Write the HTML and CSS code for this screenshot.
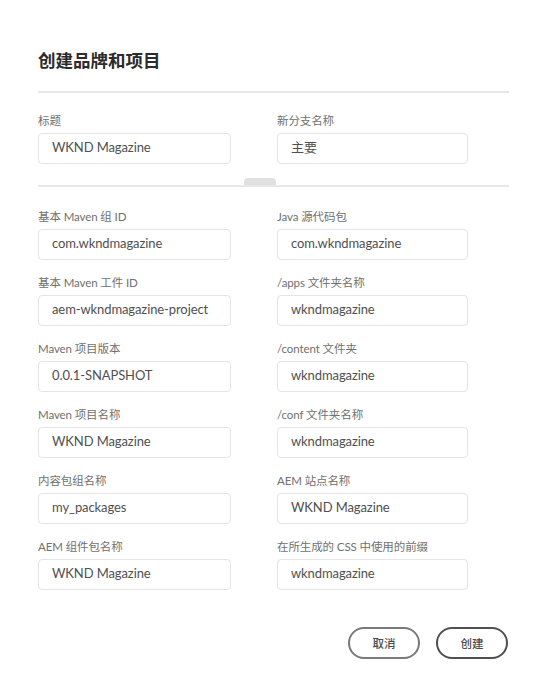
FILE: index.html
```html
<!DOCTYPE html>
<html lang="zh-CN">
<head>
<meta charset="utf-8">
<title>创建品牌和项目</title>
<link rel="stylesheet" href="styles.css">
</head>
<body>
<div class="dialog">
  <h1 class="title">创建品牌和项目</h1>
  <div class="divider"></div>
  <div class="grid top-grid">
    <div class="field">
      <div class="label">标题</div>
      <div class="input">WKND Magazine</div>
    </div>
    <div class="field">
      <div class="label">新分支名称</div>
      <div class="input">主要</div>
    </div>
  </div>
  <div class="divider divider-handle"><span class="handle"></span></div>
  <div class="grid main-grid">
    <div class="field">
      <div class="label">基本 Maven 组 ID</div>
      <div class="input">com.wkndmagazine</div>
    </div>
    <div class="field">
      <div class="label">Java 源代码包</div>
      <div class="input">com.wkndmagazine</div>
    </div>
    <div class="field">
      <div class="label">基本 Maven 工件 ID</div>
      <div class="input">aem-wkndmagazine-project</div>
    </div>
    <div class="field">
      <div class="label">/apps 文件夹名称</div>
      <div class="input">wkndmagazine</div>
    </div>
    <div class="field">
      <div class="label">Maven 项目版本</div>
      <div class="input">0.0.1-SNAPSHOT</div>
    </div>
    <div class="field">
      <div class="label">/content 文件夹</div>
      <div class="input">wkndmagazine</div>
    </div>
    <div class="field">
      <div class="label">Maven 项目名称</div>
      <div class="input">WKND Magazine</div>
    </div>
    <div class="field">
      <div class="label">/conf 文件夹名称</div>
      <div class="input">wkndmagazine</div>
    </div>
    <div class="field">
      <div class="label">内容包组名称</div>
      <div class="input">my_packages</div>
    </div>
    <div class="field">
      <div class="label">AEM 站点名称</div>
      <div class="input">WKND Magazine</div>
    </div>
    <div class="field">
      <div class="label">AEM 组件包名称</div>
      <div class="input">WKND Magazine</div>
    </div>
    <div class="field">
      <div class="label">在所生成的 CSS 中使用的前缀</div>
      <div class="input">wkndmagazine</div>
    </div>
  </div>
  <div class="footer">
    <button class="btn btn-secondary">取消</button>
    <button class="btn btn-primary">创建</button>
  </div>
</div>
</body>
</html>
```
FILE: styles.css
```css
html, body {
  margin: 0;
  padding: 0;
  background: #ffffff;
}

body {
  font-family: "Lato", "Noto Sans CJK SC", sans-serif;
  color: #4b4b4b;
}

.dialog {
  padding: 48px 39px 0 38px;
}

.title {
  margin: 0;
  font-family: "Noto Sans CJK SC", sans-serif;
  font-size: 17.5px;
  line-height: 24px;
  font-weight: 700;
  color: #2c2c2c;
}

.divider {
  height: 2px;
  background: #e8e8e8;
  margin-top: 19px;
}

.divider-handle {
  position: relative;
  margin-top: 21px;
}

.handle {
  position: absolute;
  left: 206px;
  top: -7px;
  width: 32px;
  height: 7px;
  background: #e1e1e1;
  border-radius: 4px 4px 0 0;
}

.grid {
  display: grid;
  grid-template-columns: 193px 191px;
  column-gap: 46px;
  row-gap: 15px;
}

.top-grid {
  margin-top: 20px;
}

.main-grid {
  margin-top: 22px;
}

.label {
  font-size: 11.5px;
  line-height: 16px;
  color: #707070;
  margin-bottom: 4px;
  white-space: nowrap;
  letter-spacing: -0.1px;
}

.input {
  box-sizing: border-box;
  height: 31px;
  border: 1px solid #e4e4e4;
  border-radius: 4px;
  padding: 0 12px 2px 13px;
  font-size: 13px;
  line-height: 27px;
  letter-spacing: -0.1px;
  color: #505050;
  white-space: nowrap;
  overflow: hidden;
}

.footer {
  display: flex;
  justify-content: flex-end;
  gap: 16px;
  margin-top: 37px;
  padding-right: 1px;
}

.btn {
  box-sizing: border-box;
  width: 72px;
  height: 32px;
  border-radius: 16px;
  background: #ffffff;
  font-family: "Noto Sans CJK SC", sans-serif;
  font-size: 11.5px;
  font-weight: 500;
  color: #4b4b4b;
  padding: 0;
  cursor: pointer;
}

.btn-secondary {
  border: 2px solid #7a7a7a;
}

.btn-primary {
  border: 2px solid #505050;
}
```
